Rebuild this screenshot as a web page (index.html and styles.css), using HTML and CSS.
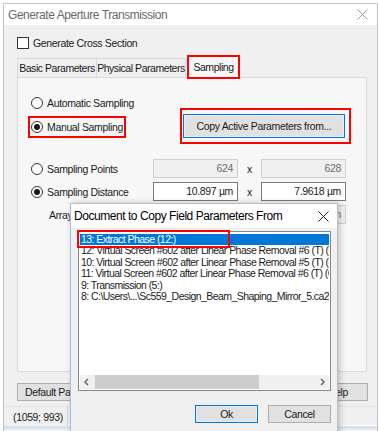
FILE: index.html
```html
<!DOCTYPE html>
<html>
<head>
<meta charset="utf-8">
<link rel="stylesheet" href="styles.css">
</head>
<body>
<div class="window">
  <div class="titlebar">
    <span class="title">Generate Aperture Transmission</span>
    <svg class="close" width="11" height="11" viewBox="0 0 11 11"><path d="M0.5 0.5 L10.5 10.5 M10.5 0.5 L0.5 10.5" stroke="#9a9a9a" stroke-width="1" fill="none"/></svg>
  </div>
  <div class="client">
    <div class="check"><span class="box"></span><span>Generate Cross Section</span></div>
    <div class="tabs">
      <span class="tab t1">Basic Parameters</span>
      <span class="tab t2">Physical Parameters</span>
      <span class="tab active">Sampling</span>
    </div>
    <div class="panel">
      <div class="opt r-auto"><span class="radio"></span><span>Automatic Sampling</span></div>
      <div class="r-manual">
        <div class="opt-cell"><span class="opt marked"><span class="radio on"></span><span>Manual Sampling</span></span></div>
        <span class="btn focus copy">Copy Active Parameters from...</span>
      </div>
      <div class="grid">
        <span class="opt"><span class="radio"></span><span>Sampling Points</span></span>
        <span class="field dis">624</span><span class="times">x</span><span class="field dis">628</span>
        <span class="opt"><span class="radio on"></span><span>Sampling Distance</span></span>
        <span class="field">10.897 µm</span><span class="times">x</span><span class="field">7.9618 µm</span>
        <span class="opt plain">Array Size</span>
        <span class="field dis">10.897 µm</span><span class="times">x</span><span class="field dis">7.9618 µm</span>
      </div>
    </div>
    <div class="bottom-buttons">
      <span class="btn def">Default Parameters</span>
      <span class="btn help">Help</span>
    </div>
    <div class="status">
      <span class="cell first">(1059; 993)</span>
      <span class="cell rest"></span>
    </div>
    <div class="footer-line"></div>
  </div>
</div>

<div class="dialog">
  <div class="dtitlebar">
    <span class="dtitle">Document to Copy Field Parameters From</span>
    <svg class="close" width="11" height="11" viewBox="0 0 11 11"><path d="M0.5 0.5 L10.5 10.5 M10.5 0.5 L0.5 10.5" stroke="#222" stroke-width="1" fill="none"/></svg>
  </div>
  <div class="dbody">
    <div class="listbox">
      <div class="items">
        <div class="item sel">13: Extract Phase (12:)</div>
        <div class="item">12: Virtual Screen #602 after Linear Phase Removal #6 (T) (C</div>
        <div class="item">10: Virtual Screen #602 after Linear Phase Removal #5 (T) (C</div>
        <div class="item">11: Virtual Screen #602 after Linear Phase Removal #6 (T) (C</div>
        <div class="item">9: Transmission (5:)</div>
        <div class="item">8: C:\Users\...\Sc559_Design_Beam_Shaping_Mirror_5.ca2</div>
      </div>
      <div class="hscroll">
        <svg class="arrow" width="14" height="14" viewBox="0 0 14 14"><path d="M8 4 L5 7 L8 10" stroke="#606060" stroke-width="1.4" fill="none"/></svg>
        <div class="track"><div class="thumb"></div></div>
        <svg class="arrow" width="14" height="14" viewBox="0 0 14 14"><path d="M6 4 L9 7 L6 10" stroke="#606060" stroke-width="1.4" fill="none"/></svg>
      </div>
    </div>
    <div class="dbuttons">
      <span class="btn focus ok">Ok</span>
      <span class="btn cancel">Cancel</span>
    </div>
  </div>
</div>
</body>
</html>
```

FILE: styles.css
```css
* { box-sizing: border-box; }
html, body { margin: 0; padding: 0; }
body {
  width: 379px;
  height: 431px;
  overflow: hidden;
  background: #ffffff;
  font-family: "Liberation Sans", Arial, sans-serif;
  font-size: 10.5px;
  letter-spacing: -0.35px;
  color: #1a1a1a;
  position: relative;
}

.window {
  margin: 3px 0 0 3px;
  width: 375px;
  height: 430px;
  border: 1px solid #c4c4c4;
  border-bottom: none;
  background: #f0f0f0;
  display: flex;
  flex-direction: column;
}
.titlebar {
  height: 21px;
  flex: none;
  background: #fff;
  display: flex;
  align-items: center;
  justify-content: space-between;
  padding: 0 9px 0 4px;
}
.title { font-size: 12px; letter-spacing: -0.45px; color: #6a6a6a; }

.client { display: flex; flex-direction: column; flex: 1; }

.check {
  display: flex;
  align-items: center;
  gap: 4px;
  height: 13px;
  margin-top: 11px;
  padding-left: 13px;
}
.box {
  width: 12px; height: 12px;
  border: 1px solid #333;
  background: #fff;
}

.tabs {
  display: flex;
  align-items: flex-end;
  height: 22px;
  margin-top: 7px;
  padding-left: 13px;
}
.tab {
  height: 20px;
  line-height: 19px;
  border: 1px solid #d9d9d9;
  border-bottom: none;
  background: #f0f0f0;
  padding: 0;
  text-align: center;
  white-space: nowrap;
  letter-spacing: -0.45px;
}
.t1 { width: 80px; }
.t2 { width: 89px; border-left: none; }
.active {
  width: 51px;
  height: 22px;
  line-height: 21px;
  margin-left: 2px;
  background: #f7f7f7;
  outline: 2px solid #ff0000;
  outline-offset: -1px;
  position: relative;
  z-index: 1;
}

.panel {
  margin: -1px 0 0 13px;
  width: 350px;
  height: 295px;
  border: 1px solid #d9d9d9;
  background: #f7f7f7;
  padding: 0 0 0 13px;
  display: flex;
  flex-direction: column;
}

.opt {
  display: flex;
  align-items: center;
  gap: 4px;
  white-space: nowrap;
}
.r-auto { height: 14px; margin-top: 18px; }
.r-manual {
  display: flex;
  align-items: center;
  height: 24px;
  margin-top: 4px;
}
.opt-cell { width: 152px; }
.marked { position: relative; display: inline-flex; }
.marked::after {
  content: "";
  position: absolute;
  left: -3px; top: -5px; right: -3px; bottom: -5px;
  border: 2px solid #ff0000;
}

.radio {
  width: 12px; height: 12px;
  border: 1px solid #333;
  border-radius: 50%;
  background: #fff;
  display: inline-flex;
  align-items: center;
  justify-content: center;
  flex: none;
}
.radio.on::before {
  content: "";
  width: 6px; height: 6px;
  border-radius: 50%;
  background: #1a1a1a;
}

.btn {
  display: inline-flex;
  align-items: center;
  justify-content: center;
  background: #e1e1e1;
  border: 1px solid #adadad;
  white-space: nowrap;
}
.btn.focus { border-color: #0078d7; box-shadow: inset 0 0 0 1px #e6eef7; }
.copy {
  width: 162px;
  height: 24px;
  position: relative;
}
.copy::after {
  content: "";
  position: absolute;
  left: -4px; top: -7px; right: -7px; bottom: -7px;
  border: 2px solid #ff0000;
}

.grid {
  display: grid;
  grid-template-columns: 122px 85px 23px 85px;
  grid-auto-rows: 19px;
  row-gap: 4px;
  align-items: center;
  margin-top: 21px;
}
.plain { padding-left: 18px; }
.field {
  height: 19px;
  border: 1px solid #7a7a7a;
  background: #fff;
  text-align: right;
  padding: 0 4px;
  line-height: 17px;
}
.field.dis {
  border-color: #cfcfcf;
  background: #f0f0f0;
  color: #6d6d6d;
}
.times { text-align: center; }

.bottom-buttons {
  display: flex;
  justify-content: space-between;
  margin: 11px 9px 0 13px;
  height: 18px;
}
.def { width: 100px; }
.help { width: 60px; }

.status {
  display: flex;
  height: 20px;
  margin-top: 5px;
  border-top: 1px solid #e2e2e2;
}
.cell { display: flex; align-items: center; white-space: nowrap; }
.first {
  width: 64px;
  padding-left: 9px;
  border-right: 1px solid #d5d5d5;
}
.rest { flex: 1; border-bottom: 1px solid #ffffff; }
.footer-line { height: 3px; background: #d5e3f1; }

/* popup dialog */
.dialog {
  position: absolute;
  left: 70px;
  top: 203px;
  width: 268px;
  height: 232px;
  border: 1px solid #9ebfe2;
  border-right-color: #bdbdbd;
  border-top-color: #bdbdbd;
  background: #f0f0f0;
  box-shadow: 2px 0 6px rgba(0,0,0,0.22);
  z-index: 5;
}
.dtitlebar {
  height: 24px;
  background: #fff;
  display: flex;
  align-items: center;
  justify-content: space-between;
  padding: 0 8px 0 3px;
}
.dtitle { font-size: 12px; letter-spacing: -0.45px; color: #000; white-space: nowrap; }
.dbody { padding: 3px 0 0 7px; }
.listbox {
  width: 253px;
  height: 160px;
  border: 1px solid #828790;
  background: #fff;
  padding: 2px 1px 1px 1px;
  display: flex;
  flex-direction: column;
  justify-content: space-between;
}
.items { font-size: 10.5px; letter-spacing: -0.55px; }
.item {
  height: 11.4px;
  line-height: 11.4px;
  padding-left: 1px;
  white-space: nowrap;
  overflow: hidden;
}
.item.sel {
  background: #0078d7;
  color: #fff;
  position: relative;
  overflow: visible;
}
.item.sel::after {
  content: "";
  position: absolute;
  left: -3px; top: -4px;
  width: 149px; bottom: -3px;
  border: 2px solid #ff0000;
}
.hscroll {
  display: flex;
  height: 14px;
  background: #f0f0f0;
}
.arrow { flex: none; }
.track { flex: 1; padding: 0 1px; }
.thumb { width: 164px; height: 14px; background: #cdcdcd; }
.dbuttons {
  width: 253px;
  display: flex;
  justify-content: flex-end;
  gap: 10px;
  margin-top: 14px;
}
.ok, .cancel { width: 63px; height: 18px; }
```
